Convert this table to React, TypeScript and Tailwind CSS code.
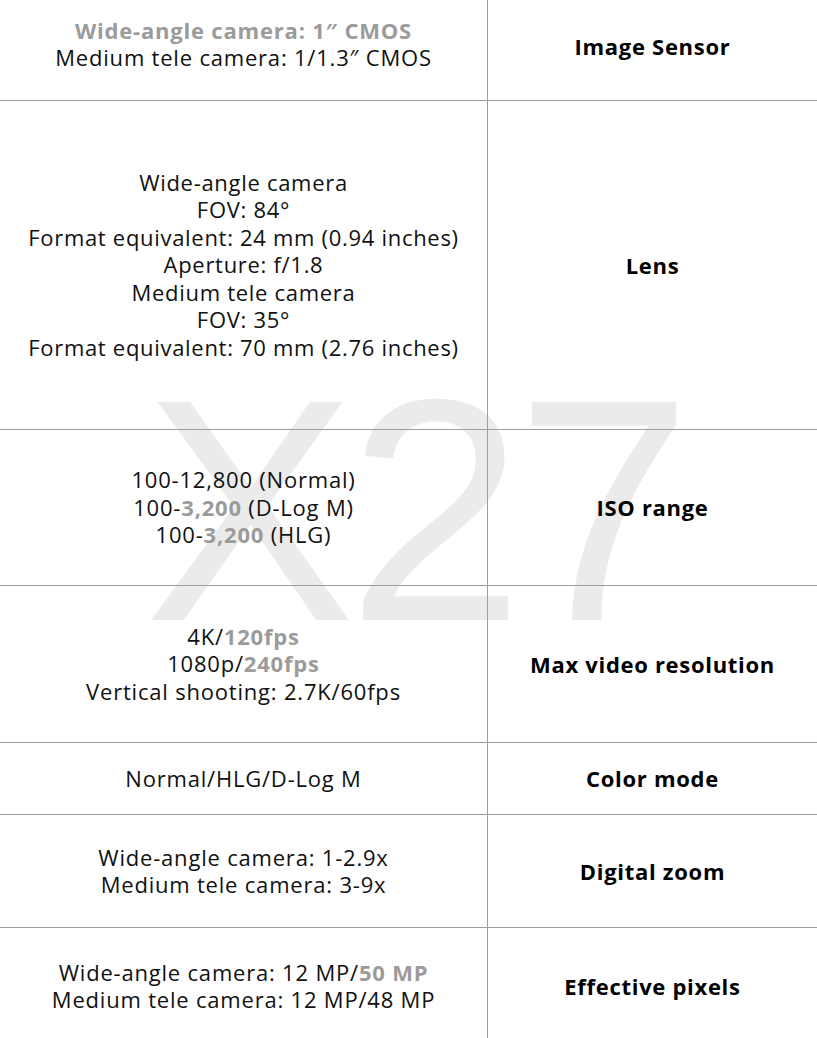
import React from "react";

type Row = {
  h: string;
  label: string;
  lines: React.ReactNode[];
  wide?: boolean;
};

const G = ({ children }: { children: React.ReactNode }) => (
  <span className="font-bold text-[#9b9b9b]">{children}</span>
);

const rows: Row[] = [
  {
    h: "h-[101px]",
    label: "Image Sensor",
    lines: [
      <G>Wide-angle camera: 1″ CMOS</G>,
      <>Medium tele camera: 1/1.3″ CMOS</>,
    ],
  },
  {
    h: "h-[329px]",
    label: "Lens",
    wide: true,
    lines: [
      "Wide-angle camera",
      "FOV: 84°",
      "Format equivalent: 24 mm (0.94 inches)",
      "Aperture: f/1.8",
      "Medium tele camera",
      "FOV: 35°",
      "Format equivalent: 70 mm (2.76 inches)",
    ],
  },
  {
    h: "h-[156px]",
    label: "ISO range",
    lines: [
      "100-12,800 (Normal)",
      <>100-<G>3,200</G> (D-Log M)</>,
      <>100-<G>3,200</G> (HLG)</>,
    ],
  },
  {
    h: "h-[157px]",
    label: "Max video resolution",
    lines: [
      <>4K/<G>120fps</G></>,
      <>1080p/<G>240fps</G></>,
      "Vertical shooting: 2.7K/60fps",
    ],
  },
  {
    h: "h-[72px]",
    label: "Color mode",
    lines: ["Normal/HLG/D-Log M"],
  },
  {
    h: "h-[113px]",
    label: "Digital zoom",
    lines: ["Wide-angle camera: 1-2.9x", "Medium tele camera: 3-9x"],
  },
  {
    h: "h-[116px]",
    label: "Effective pixels",
    lines: [
      <>Wide-angle camera: 12 MP/<G>50 MP</G></>,
      "Medium tele camera: 12 MP/48 MP",
    ],
  },
];

export default function App() {
  return (
    <div className="relative w-[817px] h-[1038px] overflow-hidden bg-white font-['Open_Sans',sans-serif] text-[#111]">
      {/* watermark */}
      <div aria-hidden className="absolute left-[144px] top-[352px] select-none font-['Liberation_Sans',sans-serif] font-normal text-[317px] leading-none tracking-[-8px] text-[#ebebeb]">
        X27
      </div>

      <div className="relative">
        {rows.map((r, i) => (
          <div key={i} className={`flex ${r.h} ${i < rows.length - 1 ? "border-b border-[#9d9d9d]" : ""}`}>
            <div
              className={`w-[488px] border-r border-[#9d9d9d] flex flex-col items-center justify-center text-center text-[22px] leading-[27.4px] ${
                r.wide ? "tracking-[0.7px]" : "tracking-[0.8px]"
              } ${i === 0 ? "pb-[12px]" : ""}`}
            >
              {r.lines.map((l, j) => (
                <div key={j}>{l}</div>
              ))}
            </div>
            <div
              className={`flex-1 flex items-center justify-center text-[22px] font-bold tracking-[0.7px] text-black ${
                i === 0 ? "pb-[8px]" : ""
              }`}
            >
              {r.label}
            </div>
          </div>
        ))}
      </div>
    </div>
  );
}
